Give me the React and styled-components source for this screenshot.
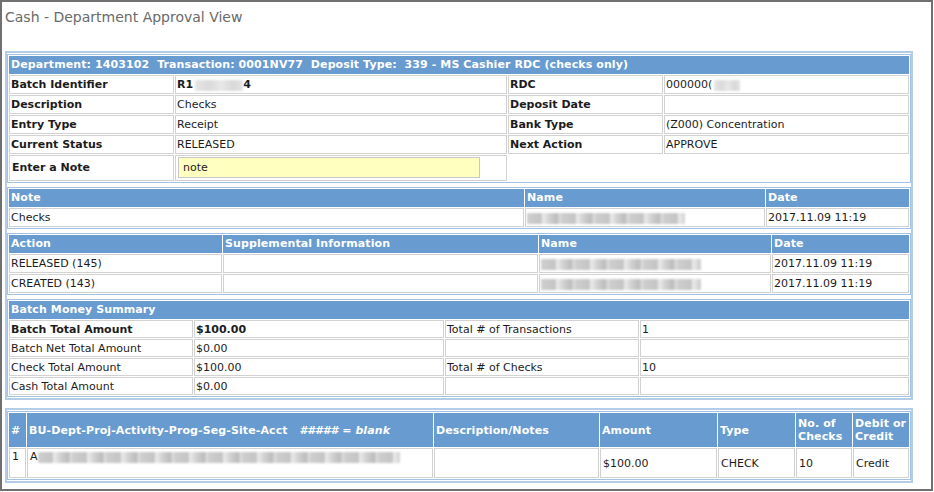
import React from "react";
import styled, { createGlobalStyle } from "styled-components";

const Global = createGlobalStyle`
  html, body { margin: 0; padding: 0; background: #fff; }
  body { font-family: "DejaVu Sans", Verdana, sans-serif; }
`;

const Window = styled.div`
  box-sizing: border-box;
  width: 933px;
  height: 491px;
  border: 2px solid #707070;
  background: #fff;
  padding: 0 0 0 3px;
`;

const Title = styled.h1`
  margin: 0;
  box-sizing: border-box;
  height: 49px;
  padding: 7px 0 0 0;
  font: normal 14px/17px "DejaVu Sans", Verdana, sans-serif;
  color: #6a6a6a;
`;

const Panel = styled.div`
  box-sizing: border-box;
  width: 908px;
  border: 2px solid #b3cde9;
  padding: 1px 0 1px;
  display: flex;
  flex-direction: column;
  gap: 4px;
  margin-top: ${(p) => p.$mt || 0}px;
`;

const Table = styled.table`
  width: 100%;
  table-layout: fixed;
  border-collapse: separate;
  border-spacing: 1px;
  border: 1px solid #a3c2e4;
  font: 11px/13px "DejaVu Sans", Verdana, sans-serif;
  color: #1c1c1c;
  background: #fff;
`;

const Th = styled.th`
  background: #689bd0;
  border: 1px solid #689bd0;
  color: #fff;
  font-weight: bold;
  text-align: left;
  padding: ${(p) => (p.$tall ? "3px 1px" : "1px 1px 2px")};
  white-space: pre;
  vertical-align: middle;
  overflow: hidden;
  letter-spacing: 0.1px;
`;

const Td = styled.td`
  border: 1px solid ${(p) => (p.$plain ? "#fff" : "#d2d2d2")};
  padding: ${(p) => (p.$compact ? "2px 1px 1px" : "2px 1px")};
  font-weight: ${(p) => (p.$bold ? "bold" : "normal")};
  vertical-align: middle;
  white-space: nowrap;
  overflow: hidden;
`;

const NoteCell = styled(Td)`
  padding: 1px 1px 2px 2px;
`;

const LineCell = styled(Td)`
  vertical-align: ${(p) => (p.$top ? "top" : "middle")};
  padding: ${(p) => (p.$top ? "1px 1px 14px 2px" : "2px 1px 2px 2px")};
`;

const NoteInput = styled.input`
  box-sizing: border-box;
  display: block;
  width: 302px;
  height: 21px;
  margin: 0;
  border: 1px solid #c8c8c8;
  background: #ffffc0;
  padding: 0 4px;
  font: 11px "DejaVu Sans", Verdana, sans-serif;
  color: #1c1c1c;
  outline: none;
`;

const Redacted = styled.span`
  display: inline-block;
  vertical-align: middle;
  width: ${(p) => p.$w}px;
  height: 11px;
  margin-left: ${(p) => p.$ml || 0}px;
  background: ${(p) =>
    p.$light
      ? "linear-gradient(90deg,#e6e6e6 0%,#dadada 30%,#e8e8e8 55%,#d8d8d8 80%,#e4e4e4 100%)"
      : "repeating-linear-gradient(90deg,#cfcfcf 0px,#c4c4c4 14px,#ececec 16px,#d2d2d2 22px,#bcbcbc 30px,#e6e6e6 34px)"};
  filter: blur(1.3px);
`;

const Italic = styled.span`
  font-style: italic;
`;

function Redact({ w, ml, light }) {
  return <Redacted $w={w} $ml={ml} $light={light} aria-label="redacted" />;
}

function Cols({ widths }) {
  return (
    <colgroup>
      {widths.map((w, i) => (
        <col key={i} style={w ? { width: w } : undefined} />
      ))}
    </colgroup>
  );
}

export default function App() {
  return (
    <>
      <Global />
      <Window>
        <Title>Cash - Department Approval View</Title>
        <Panel>
          <Table>
            <Cols widths={[165, 332, 155, null]} />
            <thead>
              <tr>
                <Th colSpan={4}>
                  {"Department: 1403102  Transaction: 0001NV77  Deposit Type:  339 - MS Cashier RDC (checks only)"}
                </Th>
              </tr>
            </thead>
            <tbody>
              <tr>
                <Td $bold>Batch Identifier</Td>
                <Td $bold>
                  R1
                  <Redact w={48} ml={2} light />4
                </Td>
                <Td $bold>RDC</Td>
                <Td>
                  000000(
                  <Redact w={26} ml={2} light />
                </Td>
              </tr>
              <tr>
                <Td $bold>Description</Td>
                <Td>Checks</Td>
                <Td $bold>Deposit Date</Td>
                <Td></Td>
              </tr>
              <tr>
                <Td $bold>Entry Type</Td>
                <Td>Receipt</Td>
                <Td $bold>Bank Type</Td>
                <Td>(Z000) Concentration</Td>
              </tr>
              <tr>
                <Td $bold>Current Status</Td>
                <Td>RELEASED</Td>
                <Td $bold>Next Action</Td>
                <Td>APPROVE</Td>
              </tr>
              <tr>
                <NoteCell $bold>Enter a Note</NoteCell>
                <NoteCell>
                  <NoteInput defaultValue="note" />
                </NoteCell>
                <NoteCell $plain colSpan={2}></NoteCell>
              </tr>
            </tbody>
          </Table>

          <Table>
            <Cols widths={[515, 240, null]} />
            <thead>
              <tr>
                <Th>Note</Th>
                <Th>Name</Th>
                <Th>Date</Th>
              </tr>
            </thead>
            <tbody>
              <tr>
                <Td>Checks</Td>
                <Td>
                  <Redact w={158} />
                </Td>
                <Td>2017.11.09 11:19</Td>
              </tr>
            </tbody>
          </Table>

          <Table>
            <Cols widths={[213, 315, 232, null]} />
            <thead>
              <tr>
                <Th>Action</Th>
                <Th>Supplemental Information</Th>
                <Th>Name</Th>
                <Th>Date</Th>
              </tr>
            </thead>
            <tbody>
              <tr>
                <Td>RELEASED (145)</Td>
                <Td></Td>
                <Td>
                  <Redact w={160} />
                </Td>
                <Td>2017.11.09 11:19</Td>
              </tr>
              <tr>
                <Td>CREATED (143)</Td>
                <Td></Td>
                <Td>
                  <Redact w={160} />
                </Td>
                <Td>2017.11.09 11:19</Td>
              </tr>
            </tbody>
          </Table>

          <Table>
            <Cols widths={[184, 250, 194, null]} />
            <thead>
              <tr>
                <Th colSpan={4}>Batch Money Summary</Th>
              </tr>
            </thead>
            <tbody>
              <tr>
                <Td $compact $bold>Batch Total Amount</Td>
                <Td $compact $bold>$100.00</Td>
                <Td $compact>Total # of Transactions</Td>
                <Td $compact>1</Td>
              </tr>
              <tr>
                <Td $compact>Batch Net Total Amount</Td>
                <Td $compact>$0.00</Td>
                <Td $compact></Td>
                <Td $compact></Td>
              </tr>
              <tr>
                <Td $compact>Check Total Amount</Td>
                <Td $compact>$100.00</Td>
                <Td $compact>Total # of Checks</Td>
                <Td $compact>10</Td>
              </tr>
              <tr>
                <Td $compact>Cash Total Amount</Td>
                <Td $compact>$0.00</Td>
                <Td $compact></Td>
                <Td $compact></Td>
              </tr>
            </tbody>
          </Table>
        </Panel>

        <Panel $mt={8}>
          <Table>
            <Cols widths={[17, 406, 165, 117, 77, 56, null]} />
            <thead>
              <tr>
                <Th $tall>#</Th>
                <Th $tall>
                  {"BU-Dept-Proj-Activity-Prog-Seg-Site-Acct   "}
                  <Italic>{"##### = blank"}</Italic>
                </Th>
                <Th $tall>Description/Notes</Th>
                <Th $tall>Amount</Th>
                <Th $tall>Type</Th>
                <Th $tall>{"No. of\nChecks"}</Th>
                <Th $tall>{"Debit or\nCredit"}</Th>
              </tr>
            </thead>
            <tbody>
              <tr>
                <LineCell $top>1</LineCell>
                <LineCell $top>
                  A<Redact w={362} />
                </LineCell>
                <LineCell></LineCell>
                <LineCell>$100.00</LineCell>
                <LineCell>CHECK</LineCell>
                <LineCell>10</LineCell>
                <LineCell>Credit</LineCell>
              </tr>
            </tbody>
          </Table>
        </Panel>
      </Window>
    </>
  );
}
